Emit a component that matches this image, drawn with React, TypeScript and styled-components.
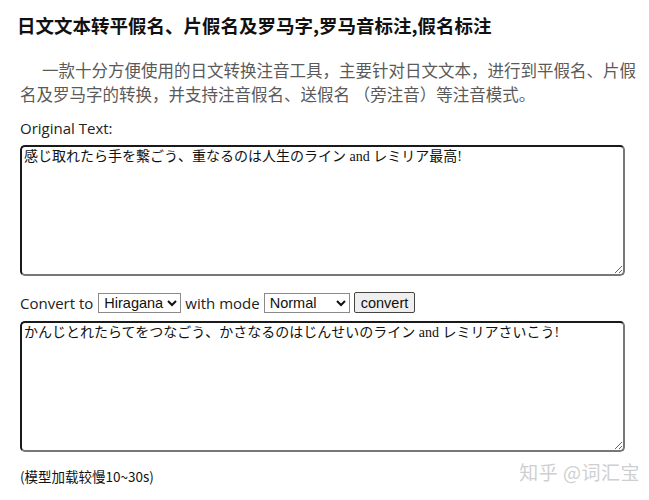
import React from "react";
import styled, { createGlobalStyle } from "styled-components";

const Global = createGlobalStyle`
  html, body { margin: 0; padding: 0; background: #fff; }
  body { font-family: "Noto Sans CJK SC", "Noto Sans", sans-serif; }
`;

const Page = styled.div`
  position: relative;
  width: 649px;
  height: 500px;
  box-sizing: border-box;
  padding: 12px 24px 0 20px;
  display: flex;
  flex-direction: column;
  overflow: hidden;
`;

const Title = styled.h1`
  margin: 0 0 0 -3px;
  font-family: "Noto Sans CJK SC", sans-serif;
  font-size: 18.5px;
  line-height: 26px;
  font-weight: 700;
  color: #111;
  letter-spacing: 0;
`;

const Intro = styled.p`
  margin: 20px -16px 0 0;
  font-family: "Noto Sans CJK SC", sans-serif;
  font-size: 16.5px;
  line-height: 24px;
  color: #5a5a5a;
  text-indent: 22px;
`;

const Label = styled.div`
  margin-top: 12px;
  font-family: "Open Sans", "Noto Sans", sans-serif;
  font-size: 15px;
  line-height: 20px;
  color: #222;
`;

const TextBox = styled.textarea`
  display: block;
  box-sizing: border-box;
  width: 605px;
  height: 131px;
  margin: 0;
  padding: 1px 2px;
  border: 2px solid;
  border-color: #1a1a1a #777 #777 #1a1a1a;
  border-radius: 5px;
  font-family: "Liberation Serif", "Noto Sans CJK JP", serif;
  font-size: 14px;
  line-height: 18px;
  color: #111;
  background: #fff;
  outline: none;
`;

const FirstBox = styled(TextBox)`
  margin-top: 7px;
`;

const ConvertRow = styled.div`
  display: flex;
  align-items: center;
  gap: 4px;
  margin: 16px 0 8px;
  height: 21px;
  font-family: "Open Sans", "Noto Sans", sans-serif;
  font-size: 15px;
  color: #222;
`;

const Select = styled.select<{ $w: number; $ml?: number }>`
  width: ${(p) => p.$w}px;
  margin-left: ${(p) => p.$ml ?? 0}px;
  height: 20px;
  box-sizing: border-box;
  border: 1px solid #8a8a8a;
  border-radius: 0;
  background: #fff;
  font-family: "Liberation Sans", Arial, sans-serif;
  font-size: 14.5px;
  color: #111;
  padding: 0 0 0 1px;
`;

const Button = styled.button`
  height: 21px;
  box-sizing: border-box;
  padding: 0 6px;
  border: 1px solid #444;
  border-radius: 2px;
  background: #efefef;
  font-family: "Liberation Sans", Arial, sans-serif;
  font-size: 14.5px;
  color: #111;
`;

const Note = styled.div`
  margin-top: 14px;
  font-family: "Noto Sans CJK SC", sans-serif;
  font-size: 13.5px;
  line-height: 20px;
  color: #111;
`;

const Watermark = styled.div`
  position: absolute;
  right: 9px;
  top: 458px;
  font-family: "Noto Sans CJK SC", sans-serif;
  font-size: 19px;
  color: #cfcfcf;
  letter-spacing: 0.5px;
`;

export default function App() {
  return (
    <>
      <Global />
      <Page>
        <Title>日文文本转平假名、片假名及罗马字,罗马音标注,假名标注</Title>
        <Intro>
          一款十分方便使用的日文转换注音工具，主要针对日文文本，进行到平假名、片假名及罗马字的转换，并支持注音假名、送假名 （旁注音）等注音模式。
        </Intro>
        <Label>Original Text:</Label>
        <FirstBox defaultValue="感じ取れたら手を繋ごう、重なるのは人生のライン and レミリア最高!" />
        <ConvertRow>
          <span>Convert to</span>
          <Select $w={83} $ml={1} defaultValue="hiragana">
            <option value="hiragana">Hiragana</option>
            <option value="katakana">Katakana</option>
            <option value="romaji">Romaji</option>
          </Select>
          <span>with mode</span>
          <Select $w={86} defaultValue="normal">
            <option value="normal">Normal</option>
            <option value="spaced">Spaced</option>
            <option value="okurigana">Okurigana</option>
            <option value="furigana">Furigana</option>
          </Select>
          <Button>convert</Button>
        </ConvertRow>
        <TextBox defaultValue="かんじとれたらてをつなごう、かさなるのはじんせいのライン and レミリアさいこう!" />
        <Note>(模型加载较慢10~30s)</Note>
        <Watermark>知乎 @词汇宝</Watermark>
      </Page>
    </>
  );
}
